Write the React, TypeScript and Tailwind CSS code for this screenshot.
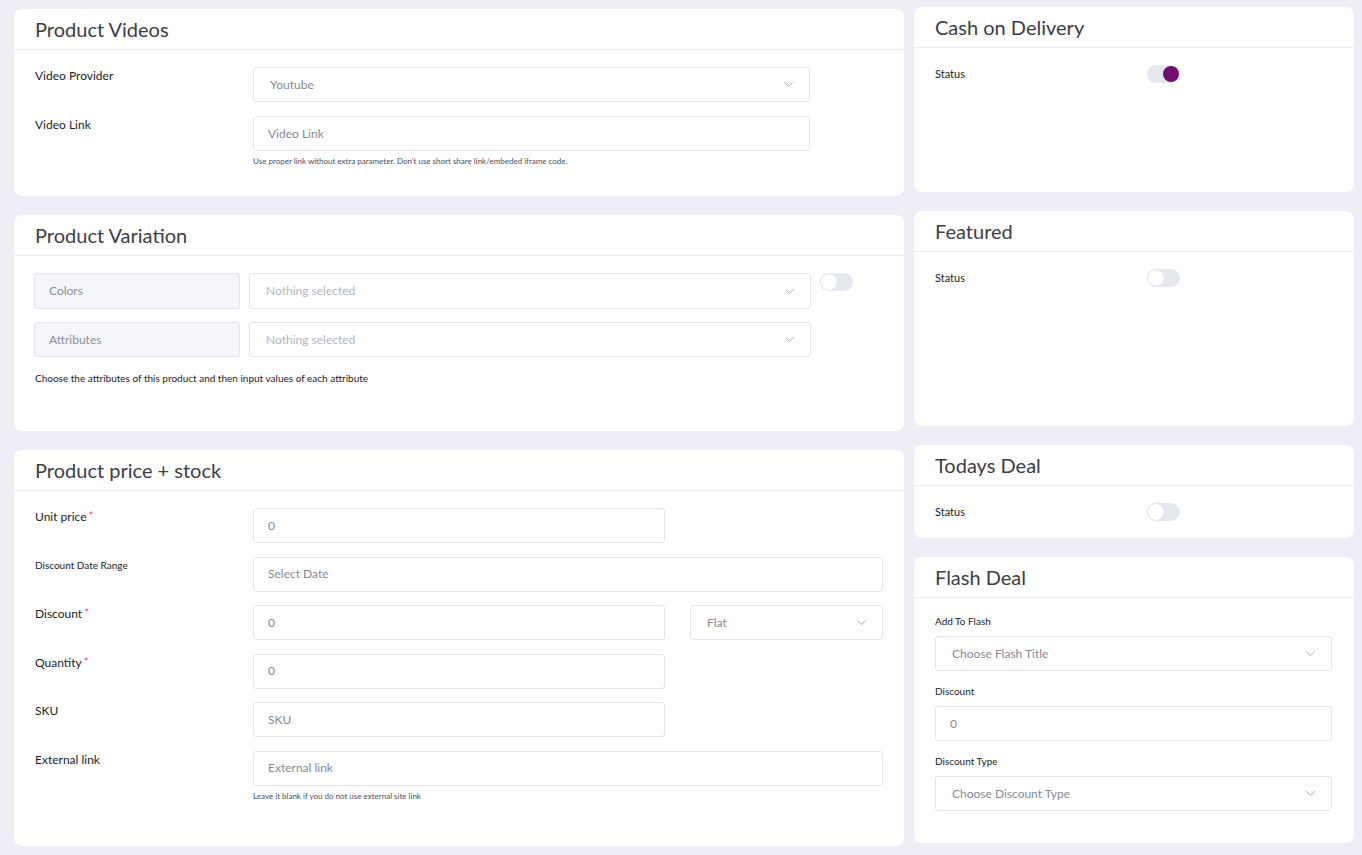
import React from 'react'

const font = { fontFamily: 'Lato, "Open Sans", "Liberation Sans", sans-serif' }

const Chevron = () => (
  <svg width="9" height="5" viewBox="0 0 9 5" fill="none" className="shrink-0">
    <path d="M0.5 0.5l4 4 4-4" stroke="#a3a7b0" strokeWidth="0.9" strokeLinecap="round" strokeLinejoin="round" />
  </svg>
)

const Card: React.FC<{ title: string; className?: string; children?: React.ReactNode }> = ({
  title,
  className = '',
  children,
}) => (
  <div className={`bg-white rounded-[8px] flex flex-col ${className}`}>
    <div className="h-[41px] border-b border-[#ebebf3] px-[21px] flex items-center">
      <h5 className="text-[20px] leading-none text-[#3d3d45] font-normal">{title}</h5>
    </div>
    {children}
  </div>
)

const Select: React.FC<{ value: string; muted?: boolean; className?: string }> = ({
  value,
  muted,
  className = '',
}) => (
  <div
    className={`h-[35px] border border-[#e2e4ec] rounded-[3px] bg-white flex items-center justify-between pl-[16px] pr-[16px] ${className}`}
  >
    <span className={`text-[12px] ${muted ? 'text-[#b3b6bd]' : 'text-[#868a94]'}`}>{value}</span>
    <Chevron />
  </div>
)

const Input: React.FC<{ value: string; className?: string }> = ({ value, className = '' }) => (
  <div
    className={`h-[35px] border border-[#e2e4ec] rounded-[3px] bg-white flex items-center px-[14px] ${className}`}
  >
    <span className="text-[12px] text-[#868a94]">{value}</span>
  </div>
)

const Toggle: React.FC<{ on?: boolean }> = ({ on }) => (
  <div className="w-[33px] h-[18px] rounded-full bg-[#e6e8ef] relative">
    <div
      className={`absolute top-[1px] w-[16px] h-[16px] rounded-full ${
        on ? 'right-[1px] bg-[#6f0f6f]' : 'left-[1px] bg-white shadow-[0_0_1px_rgba(0,0,0,0.15)]'
      }`}
    />
  </div>
)

const Req = () => <span className="text-[#ef486a] ml-[2px] text-[11px] align-top">*</span>

const Row: React.FC<{ label: React.ReactNode; small?: boolean; children: React.ReactNode }> = ({
  label,
  small,
  children,
}) => (
  <div className="flex items-start mb-[13.6px]">
    <label
      className={`w-[218px] shrink-0 text-[#1c1c24] ${small ? 'text-[10px] pt-[1px]' : 'text-[12px] pt-0'}`}
    >
      {label}
    </label>
    <div className="flex-1">{children}</div>
  </div>
)

const StatusCard: React.FC<{ title: string; on?: boolean; className: string }> = ({ title, on, className }) => (
  <Card title={title} className={className}>
    <div className="px-[21px] pt-[17px] flex items-start">
      <span className="w-[212px] text-[11px] text-[#1c1c24] pt-[1px]">Status</span>
      <Toggle on={on} />
    </div>
  </Card>
)

export default function App() {
  return (
    <div className="min-h-[855px] bg-[#efedf6] flex gap-[10px] pl-[14px]" style={font}>
      {/* Left column */}
      <div className="w-[890px] pt-[9px] flex flex-col gap-[19px]">
        <Card title="Product Videos" className="h-[187px]">
          <div className="px-[21px] pt-[17px]">
            <div className="flex items-start mb-[14px]">
              <label className="w-[218px] shrink-0 text-[12px] text-[#1c1c24]">Video Provider</label>
              <Select value="Youtube" className="w-[557px]" />
            </div>
            <div className="flex items-start">
              <label className="w-[218px] shrink-0 text-[12px] text-[#1c1c24]">Video Link</label>
              <div>
                <Input value="Video Link" className="w-[557px]" />
                <p className="text-[8px] text-[#4a4f5c] mt-[4px]">
                  Use proper link without extra parameter. Don't use short share link/embeded iframe code.
                </p>
              </div>
            </div>
          </div>
        </Card>

        <Card title="Product Variation" className="h-[216px]">
          <div className="pl-[20px] pr-[21px] pt-[17px]">
            <div className="flex items-start gap-[9px] mb-[13px]">
              <div className="w-[206px] h-[36px] bg-[#f5f6f9] border border-[#e2e4ec] rounded-[3px] flex items-center pl-[14px] text-[12px] text-[#8a8e99]">
                Colors
              </div>
              <Select value="Nothing selected" muted className="w-[562px] h-[36px]" />
              <Toggle />
            </div>
            <div className="flex items-start gap-[9px]">
              <div className="w-[206px] h-[35px] bg-[#f5f6f9] border border-[#e2e4ec] rounded-[3px] flex items-center pl-[14px] text-[12px] text-[#8a8e99]">
                Attributes
              </div>
              <Select value="Nothing selected" muted className="w-[562px]" />
            </div>
            <p className="text-[10px] text-[#1c1c24] mt-[14px] pl-[1px]">
              Choose the attributes of this product and then input values of each attribute
            </p>
          </div>
        </Card>

        <Card title="Product price + stock" className="h-[396px]">
          <div className="px-[21px] pt-[17px]">
            <Row
              label={
                <>
                  Unit price
                  <Req />
                </>
              }
            >
              <Input value="0" className="w-[412px]" />
            </Row>
            <Row label="Discount Date Range" small>
              <Input value="Select Date" className="w-[630px]" />
            </Row>
            <Row
              label={
                <>
                  Discount
                  <Req />
                </>
              }
            >
              <div className="flex gap-[25px]">
                <Input value="0" className="w-[412px]" />
                <Select value="Flat" className="w-[193px]" />
              </div>
            </Row>
            <Row
              label={
                <>
                  Quantity
                  <Req />
                </>
              }
            >
              <Input value="0" className="w-[412px]" />
            </Row>
            <Row label="SKU">
              <Input value="SKU" className="w-[412px]" />
            </Row>
            <div className="flex items-start">
              <label className="w-[218px] shrink-0 text-[12px] text-[#1c1c24]">External link</label>
              <div>
                <Input value="External link" className="w-[630px]" />
                <p className="text-[8px] text-[#4a4f5c] mt-[4px]">
                  Leave it blank if you do not use external site link
                </p>
              </div>
            </div>
          </div>
        </Card>
      </div>

      {/* Right column */}
      <div className="w-[440px] pt-[7px] flex flex-col gap-[19px]">
        <StatusCard title="Cash on Delivery" on className="h-[185px]" />
        <StatusCard title="Featured" className="h-[215px]" />
        <StatusCard title="Todays Deal" className="h-[93px]" />
        <Card title="Flash Deal" className="h-[286px]">
          <div className="px-[21px] pt-[16px]">
            <p className="text-[10px] text-[#1c1c24] mb-[7px]">Add To Flash</p>
            <Select value="Choose Flash Title" className="w-[397px]" />
            <p className="text-[10px] text-[#1c1c24] mt-[13px] mb-[7px]">Discount</p>
            <Input value="0" className="w-[397px]" />
            <p className="text-[10px] text-[#1c1c24] mt-[13px] mb-[7px]">Discount Type</p>
            <Select value="Choose Discount Type" className="w-[397px]" />
          </div>
        </Card>
      </div>
    </div>
  )
}
